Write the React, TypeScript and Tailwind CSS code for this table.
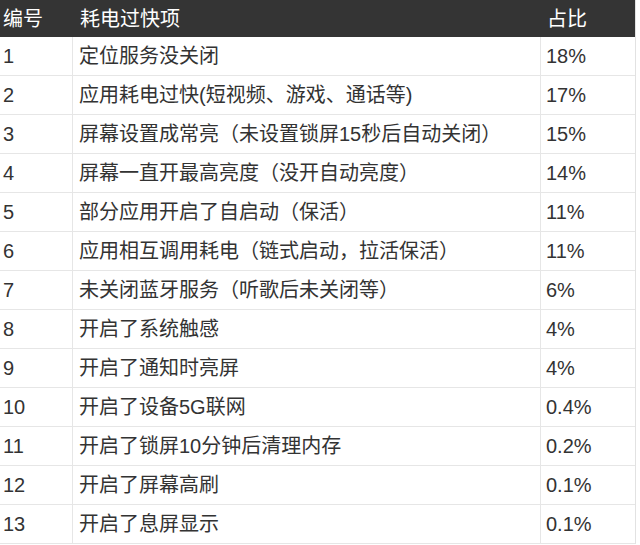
import React from 'react';

const rows: [string, string, string][] = [
  ['1', '定位服务没关闭', '18%'],
  ['2', '应用耗电过快(短视频、游戏、通话等)', '17%'],
  ['3', '屏幕设置成常亮（未设置锁屏15秒后自动关闭）', '15%'],
  ['4', '屏幕一直开最高亮度（没开自动亮度）', '14%'],
  ['5', '部分应用开启了自启动（保活）', '11%'],
  ['6', '应用相互调用耗电（链式启动，拉活保活）', '11%'],
  ['7', '未关闭蓝牙服务（听歌后未关闭等）', '6%'],
  ['8', '开启了系统触感', '4%'],
  ['9', '开启了通知时亮屏', '4%'],
  ['10', '开启了设备5G联网', '0.4%'],
  ['11', '开启了锁屏10分钟后清理内存', '0.2%'],
  ['12', '开启了屏幕高刷', '0.1%'],
  ['13', '开启了息屏显示', '0.1%'],
];

const App: React.FC = () => {
  return (
    <div className="w-[640px] h-[545px] overflow-hidden bg-white font-['Liberation_Sans','Noto_Sans_CJK_SC',sans-serif] text-[20px]">
      <div className="w-[636px] border-r border-[#e2e2e2]">
        <div className="flex h-[37px] items-center bg-[#343434] text-white">
          <div className="w-[73px] pl-[3px]">编号</div>
          <div className="w-[468px] pl-[7px]">耗电过快项</div>
          <div className="flex-1 pl-[6px]">占比</div>
        </div>
        {rows.map(([no, item, pct]) => (
          <div key={no} className="flex h-[39px] items-stretch border-b border-[#e6e6e6] text-[#333333]">
            <div className="flex w-[73px] items-center border-r border-[#e6e6e6] pl-[3px]">{no}</div>
            <div className="flex w-[468px] items-center border-r border-[#e6e6e6] pl-[6px] whitespace-nowrap">{item}</div>
            <div className="flex flex-1 items-center pl-[5px]">{pct}</div>
          </div>
        ))}
      </div>
    </div>
  );
};

export default App;
